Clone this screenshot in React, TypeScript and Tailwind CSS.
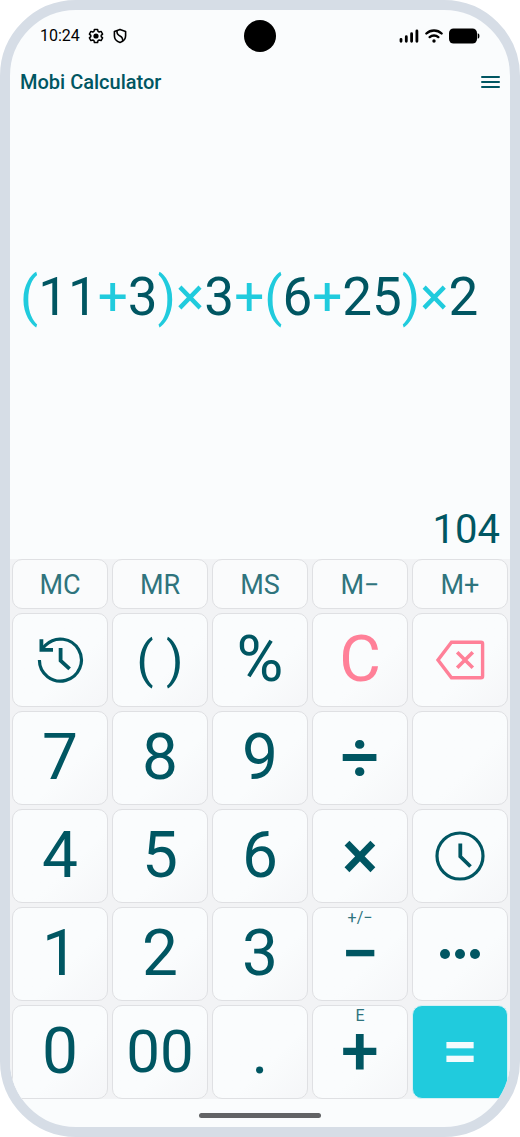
import type { ReactNode } from 'react';

type Key = {
  label: string;
  content: ReactNode;
  hint?: string;
  className?: string;
};

const memoryKeys = ['MC', 'MR', 'MS', 'M−', 'M+'];

const expression = ['(', '11', '+', '3', ')', '×', '3', '+', '(', '6', '+', '25', ')', '×', '2'];

function HistoryIcon() {
  return (
    <svg viewBox="0 0 48 48" className="size-12" fill="none" stroke="currentColor" strokeWidth="3.2" aria-hidden="true">
      <path d="M3.4 24a21 21 0 1 0 6.2-14.8L5 13.8" />
      <path d="M5.4 3.2v10.6h11.6" strokeWidth="3.8" />
      <path d="M24.6 12v12.6l9 8.2" strokeWidth="3.8" />
    </svg>
  );
}

function BackspaceIcon() {
  return (
    <svg viewBox="0 0 50 40" className="h-10 w-[50px]" fill="none" stroke="currentColor" strokeWidth="3.4" aria-hidden="true">
      <path d="M16.5 2.2H46q1.6 0 1.6 1.6v32.4q0 1.6-1.6 1.6H16.5L3 20Z" />
      <path d="M22.2 12.2l15.6 15.6M37.8 12.2L22.2 27.8" strokeWidth="3.6" />
    </svg>
  );
}

function ClockIcon() {
  return (
    <svg viewBox="0 0 50 50" className="size-[50px]" fill="none" stroke="currentColor" strokeWidth="3.2" aria-hidden="true">
      <circle cx="25" cy="25" r="23" />
      <path d="M25.3 12.5v13L35.5 35.5" strokeWidth="3.8" />
    </svg>
  );
}

function DotsIcon() {
  return (
    <svg viewBox="0 0 40 10" className="h-2.5 w-10" fill="currentColor" aria-hidden="true">
      <circle cx="5" cy="5" r="5" />
      <circle cx="20" cy="5" r="5" />
      <circle cx="35" cy="5" r="5" />
    </svg>
  );
}

const keys: Key[] = [
  { label: 'History', content: <HistoryIcon /> },
  { label: 'Parentheses', content: '( )', className: 'text-[50px]' },
  { label: 'Percent', content: '%' },
  { label: 'Clear', content: 'C', className: 'text-[#ff8098]' },
  { label: 'Backspace', content: <BackspaceIcon />, className: 'text-[#ff8098]' },
  { label: '7', content: '7' },
  { label: '8', content: '8' },
  { label: '9', content: '9' },
  { label: 'Divide', content: '÷', className: 'text-[68px] font-medium' },
  { label: 'Empty', content: null },
  { label: '4', content: '4' },
  { label: '5', content: '5' },
  { label: '6', content: '6' },
  { label: 'Multiply', content: '×', className: 'text-[68px] font-medium' },
  { label: 'Time', content: <ClockIcon /> },
  { label: '1', content: '1' },
  { label: '2', content: '2' },
  { label: '3', content: '3' },
  { label: 'Minus', content: '−', hint: '+/−', className: 'text-[68px] font-medium' },
  { label: 'More', content: <DotsIcon /> },
  { label: '0', content: '0' },
  { label: '00', content: '00', className: 'text-[60px]' },
  { label: 'Decimal point', content: '.' },
  { label: 'Plus', content: '+', hint: 'E', className: 'text-[68px] font-medium' },
  { label: 'Equals', content: '=', className: 'font-medium' },
];

function StatusBar() {
  return (
    <div className="relative flex h-[52px] items-center justify-between px-[30px] text-black">
      <div className="flex items-center gap-2">
        <span className="text-base">10:24</span>
        <svg viewBox="0 0 16 16" className="size-4" fill="none" stroke="currentColor" strokeWidth="1.5" strokeLinejoin="round" aria-hidden="true">
          <path d="M6.4 1.4h3.2l.4 1.9 1.2.7 1.9-.6 1.5 2.7-1.4 1.3v1.2l1.4 1.3-1.5 2.7-1.9-.6-1.2.7-.4 1.9H6.4L6 12.7l-1.2-.7-1.9.6-1.5-2.7 1.4-1.3V7.4L1.4 6.1l1.5-2.7 1.9.6L6 3.3Z" />
          <circle cx="8" cy="8" r="2.6" fill="currentColor" stroke="none" />
        </svg>
        <svg viewBox="0 0 16 16" className="size-4" fill="none" stroke="currentColor" strokeWidth="1.6" strokeLinejoin="round" aria-hidden="true">
          <path d="M8 1.4l5.6 2v4.3c0 3.3-2.4 5.8-5.6 6.8-3.2-1-5.6-3.5-5.6-6.8V3.4Z" />
          <path d="M5 2.6c-.4 3 .8 4.3 3 5.4s3 2.6 2.6 5" />
        </svg>
      </div>
      <div className="absolute top-[10px] left-1/2 size-8 -translate-x-1/2 rounded-full bg-black" />
      <div className="flex items-center gap-1.5">
        <svg viewBox="0 0 20 14" className="h-3.5 w-5" stroke="currentColor" strokeWidth="2.8" strokeLinecap="round" aria-hidden="true">
          <path d="M2 12.3v-2M7.3 12.3V7.7M12.6 12.3V4.7M17.9 12.3V2" />
        </svg>
        <svg viewBox="0 0 18 14" className="h-3.5 w-[18px]" fill="none" stroke="currentColor" strokeWidth="2.4" strokeLinecap="round" aria-hidden="true">
          <path d="M1.4 4.5C5.6.4 12.4.4 16.6 4.5M4.7 8.1c2.4-2.2 6.2-2.2 8.6 0" />
          <circle cx="9" cy="12" r="1.7" fill="currentColor" stroke="none" />
        </svg>
        <svg viewBox="0 0 31 16" className="h-4 w-[31px]" fill="currentColor" aria-hidden="true">
          <rect x="0" y=".5" width="28" height="15" rx="4.5" />
          <path d="M28.7 5.2q1.8.3 1.8 2.8t-1.8 2.8Z" />
        </svg>
      </div>
    </div>
  );
}

function KeyButton({ item }: { item: Key }) {
  const tone =
    item.label === 'Equals'
      ? 'bg-[#20cbdd] border-[#d5f0f4] text-[#f3fbfd]'
      : 'bg-linear-to-br from-[#fafcfd] from-60% to-[#f5f6f8] border-[#dfe0e3]';
  return (
    <button
      type="button"
      aria-label={item.label}
      className={`relative flex h-[94px] items-center justify-center rounded-[10px] border leading-none ${tone} ${item.className ?? ''}`}
    >
      {item.hint && (
        <span className="absolute inset-x-0 top-0.5 text-base leading-4 font-normal text-[#2f747d]">{item.hint}</span>
      )}
      {item.content}
    </button>
  );
}

export default function App() {
  return (
    <div className="min-h-screen bg-white font-[Roboto,sans-serif] text-[#005662]">
      <main className="flex min-h-screen flex-col overflow-hidden rounded-[76px] border-10 border-[#d6dde6] bg-[#fafcfd]">
        <StatusBar />

        <header className="flex h-10 items-center justify-between px-2.5">
          <h1 className="text-xl font-medium">Mobi Calculator</h1>
          <button type="button" aria-label="Menu" className="flex w-[19px] flex-col gap-[3px]">
            <span className="h-0.5 w-full rounded-full bg-current" />
            <span className="h-0.5 w-full rounded-full bg-current" />
            <span className="h-0.5 w-full rounded-full bg-current" />
          </button>
        </header>

        <section aria-label="Display" className="flex flex-1 flex-col px-2.5">
          <p className="flex flex-1 items-center pb-3 text-[53px] leading-none whitespace-nowrap">
            {expression.map((token, i) => (
              <span key={i} className={/\d/.test(token) ? '' : 'text-[#20cbdd]'}>
                {token}
              </span>
            ))}
          </p>
          <output className="pb-1 text-right text-[40px] leading-[50px]">104</output>
        </section>

        <section aria-label="Keypad" className="flex flex-col gap-1 bg-[#f2f3f5] px-0.5">
          <div className="grid grid-cols-5 gap-1">
            {memoryKeys.map((label) => (
              <button
                key={label}
                type="button"
                className="h-[50px] rounded-[10px] border border-[#dfe0e3] bg-[#fafbfc] pt-0.5 text-[27px] leading-none text-[#2f747d]"
              >
                {label}
              </button>
            ))}
          </div>
          <div className="grid grid-cols-5 gap-1 text-[64px]">
            {keys.map((item) => (
              <KeyButton key={item.label} item={item} />
            ))}
          </div>
        </section>

        <footer className="flex h-7 items-center justify-center pt-1">
          <div className="h-[5px] w-[122px] rounded-full bg-[#626365]" />
        </footer>
      </main>
    </div>
  );
}
